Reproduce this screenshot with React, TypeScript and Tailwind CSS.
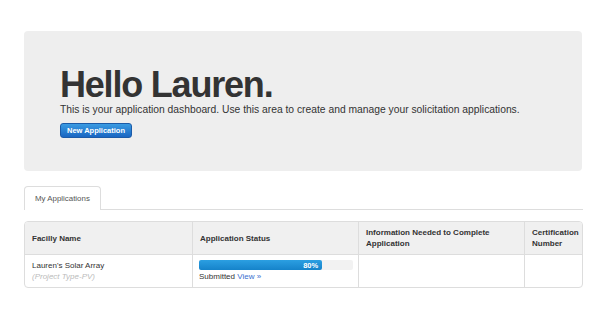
export default function App() {
  const cols = "grid grid-cols-[167px_166px_166px_1fr]";
  return (
    <div
      className="w-[607px] h-[326px] bg-white pt-[31px] pl-[24px] text-[#333]"
      style={{ fontFamily: '"Liberation Sans", Arial, sans-serif' }}
    >
      {/* hero */}
      <div className="w-[558px] rounded-[4px] bg-[#eeeeee] pt-[36px] pb-[33px] pl-[36px]">
        <h1 className="text-[36px] leading-[36px] font-bold tracking-[-1.2px] text-[#333]">Hello Lauren.</h1>
        <p className="text-[10.3px] leading-[14px] text-[#333]">
          This is your application dashboard. Use this area to create and manage your solicitation applications.
        </p>
        <button className="mt-[6px] flex h-[15px] w-[72px] items-center justify-center rounded-[3px] border border-[#1b5ba8] bg-gradient-to-b from-[#3a9be2] to-[#1a66c2] text-[7.5px] font-bold text-white">
          New Application
        </button>
      </div>

      {/* tabs */}
      <div className="mt-[15px] flex h-[24px] w-[559px] border-b border-[#dddddd]">
        <div className="-mb-px flex h-[24px] w-[77px] items-center rounded-t-[4px] border border-b-0 border-[#dddddd] bg-white pl-[10px] text-[7.9px] text-[#555]">
          My Applications
        </div>
      </div>

      {/* table */}
      <div className="mt-[11px] w-[559px] overflow-hidden rounded-[4px] border border-[#dddddd] text-[8px]">
        <div className={`${cols} h-[33px] border-b border-[#dddddd] bg-[#f0f0f0] font-bold leading-[11px]`}>
          <div className="flex items-center px-[7px]">Facilly Name</div>
          <div className="flex items-center border-l border-[#dddddd] px-[7px]">Application Status</div>
          <div className="flex items-center border-l border-[#dddddd] px-[7px]">
            Information Needed to Complete
            <br />
            Application
          </div>
          <div className="flex items-center border-l border-[#dddddd] px-[7px]">
            Certification
            <br />
            Number
          </div>
        </div>
        <div className={`${cols} h-[32px] leading-[11px]`}>
          <div className="px-[7px] pt-[5px]">
            <div>Lauren's Solar Array</div>
            <div className="italic text-[#bbbbbb]">(Project Type-PV)</div>
          </div>
          <div className="border-l border-[#dddddd] px-[6px] pt-[5px]">
            <div className="h-[10px] w-[154px] rounded-[2px] bg-[#f2f2f2]">
              <div className="flex h-[10px] w-[80%] items-center justify-end rounded-[2px] bg-gradient-to-b from-[#2b9fe2] to-[#1583ca] pr-[4px] text-[7.5px] font-bold text-white">
                80%
              </div>
            </div>
            <div className="mt-[1px]">
              Submitted <span className="text-[#3a6fcf]">View »</span>
            </div>
          </div>
          <div className="border-l border-[#dddddd]"></div>
          <div className="border-l border-[#dddddd]"></div>
        </div>
      </div>
    </div>
  );
}
